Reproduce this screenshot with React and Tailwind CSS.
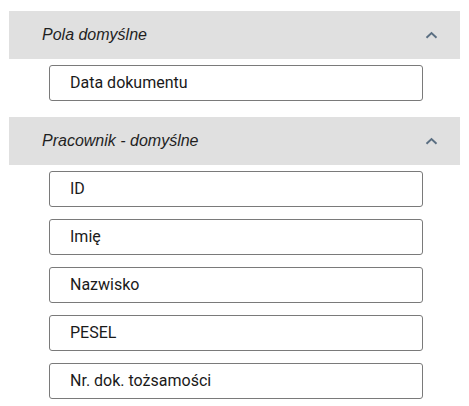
import React from "react";

const sections = [
  { title: "Pola domyślne", items: ["Data dokumentu"] },
  {
    title: "Pracownik - domyślne",
    items: ["ID", "Imię", "Nazwisko", "PESEL", "Nr. dok. tożsamości"],
  },
];

function Chevron() {
  return (
    <svg width="13" height="8" viewBox="0 0 13 8" className="text-[#5b6f82]">
      <path
        d="M1.5 6.8 L6.5 2 L11.5 6.8"
        fill="none"
        stroke="currentColor"
        strokeWidth="1.9"
      />
    </svg>
  );
}

export default function App() {
  return (
    <div className="w-[469px] h-[406px] bg-white pt-[11px] px-[9px]">
      {sections.map((s, i) => (
        <div key={s.title} className={i > 0 ? "mt-4" : ""}>
          <div className="h-12 bg-[#e0e0e0] flex items-center justify-between pl-[33px] pr-[22px]">
            <span className="italic text-[16px] text-[#1f1f1f] font-['Liberation_Sans',Arial,sans-serif]">
              {s.title}
            </span>
            <Chevron />
          </div>
          <ul className="mt-[6px] flex flex-col gap-3 pl-10 w-[414px]">
            {s.items.map((item) => (
              <li
                key={item}
                className="h-9 border border-[#7a7a7a] rounded-[3px] flex items-center pl-5 text-[16px] text-[#1a1a1a] font-['Roboto',sans-serif]"
              >
                {item}
              </li>
            ))}
          </ul>
        </div>
      ))}
    </div>
  );
}
